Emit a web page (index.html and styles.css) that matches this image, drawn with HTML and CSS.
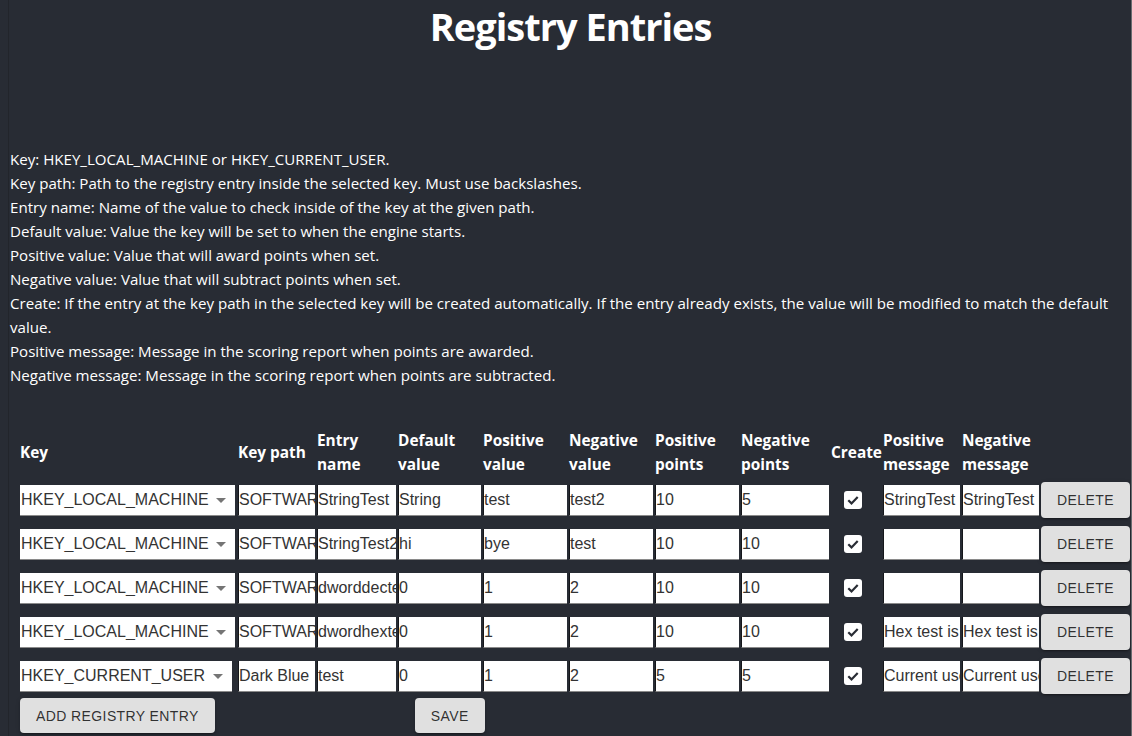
FILE: index.html
```html
<!DOCTYPE html>
<html lang="en">
<head>
<meta charset="utf-8">
<title>Registry Entries</title>
<link rel="stylesheet" href="styles.css">
</head>
<body>
<div class="page">
  <h1 class="title">Registry Entries</h1>
  <div class="help">
    <div>Key: HKEY_LOCAL_MACHINE or HKEY_CURRENT_USER.</div>
    <div>Key path: Path to the registry entry inside the selected key. Must use backslashes.</div>
    <div>Entry name: Name of the value to check inside of the key at the given path.</div>
    <div>Default value: Value the key will be set to when the engine starts.</div>
    <div>Positive value: Value that will award points when set.</div>
    <div>Negative value: Value that will subtract points when set.</div>
    <div>Create: If the entry at the key path in the selected key will be created automatically. If the entry already exists, the value will be modified to match the default value.</div>
    <div>Positive message: Message in the scoring report when points are awarded.</div>
    <div>Negative message: Message in the scoring report when points are subtracted.</div>
  </div>

  <table class="grid">
    <colgroup>
      <col class="c-key"><col class="c-path"><col class="c-name"><col class="c-def">
      <col class="c-pv"><col class="c-nv"><col class="c-pp"><col class="c-np">
      <col class="c-create"><col class="c-pm"><col class="c-nm"><col class="c-del">
    </colgroup>
    <thead>
      <tr>
        <th>Key</th><th>Key path</th><th>Entry name</th><th>Default value</th>
        <th>Positive value</th><th>Negative value</th><th>Positive points</th><th>Negative points</th>
        <th>Create</th><th>Positive message</th><th>Negative message</th><th></th>
      </tr>
    </thead>
    <tbody>
      <tr>
        <td><div class="select"><select><option>HKEY_LOCAL_MACHINE</option><option>HKEY_CURRENT_USER</option></select><svg class="arrow" viewBox="0 0 10 5" width="10" height="5"><path d="M0 0h10L5 5z"/></svg></div></td>
        <td><input type="text" value="SOFTWARE\Test"></td>
        <td><input type="text" value="StringTest"></td>
        <td><input type="text" value="String"></td>
        <td><input type="text" value="test"></td>
        <td><input type="text" value="test2"></td>
        <td><input type="text" value="10"></td>
        <td><input type="text" value="5"></td>
        <td class="cbcell"><span class="check"><svg viewBox="0 0 18 18" width="18" height="18"><path d="M4.3 9.3l3.2 3.1 6.2-6.4" fill="none" stroke="#282c34" stroke-width="2.2"/></svg></span></td>
        <td><input type="text" value="StringTest positive"></td>
        <td><input type="text" value="StringTest negative"></td>
        <td><button class="btn del">Delete</button></td>
      </tr>
      <tr>
        <td><div class="select"><select><option>HKEY_LOCAL_MACHINE</option><option>HKEY_CURRENT_USER</option></select><svg class="arrow" viewBox="0 0 10 5" width="10" height="5"><path d="M0 0h10L5 5z"/></svg></div></td>
        <td><input type="text" value="SOFTWARE\Test"></td>
        <td><input type="text" value="StringTest2"></td>
        <td><input type="text" value="hi"></td>
        <td><input type="text" value="bye"></td>
        <td><input type="text" value="test"></td>
        <td><input type="text" value="10"></td>
        <td><input type="text" value="10"></td>
        <td class="cbcell"><span class="check"><svg viewBox="0 0 18 18" width="18" height="18"><path d="M4.3 9.3l3.2 3.1 6.2-6.4" fill="none" stroke="#282c34" stroke-width="2.2"/></svg></span></td>
        <td><input type="text" value=""></td>
        <td><input type="text" value=""></td>
        <td><button class="btn del">Delete</button></td>
      </tr>
      <tr>
        <td><div class="select"><select><option>HKEY_LOCAL_MACHINE</option><option>HKEY_CURRENT_USER</option></select><svg class="arrow" viewBox="0 0 10 5" width="10" height="5"><path d="M0 0h10L5 5z"/></svg></div></td>
        <td><input type="text" value="SOFTWARE\Test"></td>
        <td><input type="text" value="dworddectest"></td>
        <td><input type="text" value="0"></td>
        <td><input type="text" value="1"></td>
        <td><input type="text" value="2"></td>
        <td><input type="text" value="10"></td>
        <td><input type="text" value="10"></td>
        <td class="cbcell"><span class="check"><svg viewBox="0 0 18 18" width="18" height="18"><path d="M4.3 9.3l3.2 3.1 6.2-6.4" fill="none" stroke="#282c34" stroke-width="2.2"/></svg></span></td>
        <td><input type="text" value=""></td>
        <td><input type="text" value=""></td>
        <td><button class="btn del">Delete</button></td>
      </tr>
      <tr>
        <td><div class="select"><select><option>HKEY_LOCAL_MACHINE</option><option>HKEY_CURRENT_USER</option></select><svg class="arrow" viewBox="0 0 10 5" width="10" height="5"><path d="M0 0h10L5 5z"/></svg></div></td>
        <td><input type="text" value="SOFTWARE\Test"></td>
        <td><input type="text" value="dwordhextest"></td>
        <td><input type="text" value="0"></td>
        <td><input type="text" value="1"></td>
        <td><input type="text" value="2"></td>
        <td><input type="text" value="10"></td>
        <td><input type="text" value="10"></td>
        <td class="cbcell"><span class="check"><svg viewBox="0 0 18 18" width="18" height="18"><path d="M4.3 9.3l3.2 3.1 6.2-6.4" fill="none" stroke="#282c34" stroke-width="2.2"/></svg></span></td>
        <td><input type="text" value="Hex test is positive"></td>
        <td><input type="text" value="Hex test is negative"></td>
        <td><button class="btn del">Delete</button></td>
      </tr>
      <tr>
        <td><div class="select narrow"><select><option>HKEY_CURRENT_USER</option><option>HKEY_LOCAL_MACHINE</option></select><svg class="arrow" viewBox="0 0 10 5" width="10" height="5"><path d="M0 0h10L5 5z"/></svg></div></td>
        <td><input type="text" value="Dark Blue"></td>
        <td><input type="text" value="test"></td>
        <td><input type="text" value="0"></td>
        <td><input type="text" value="1"></td>
        <td><input type="text" value="2"></td>
        <td><input type="text" value="5"></td>
        <td><input type="text" value="5"></td>
        <td class="cbcell"><span class="check"><svg viewBox="0 0 18 18" width="18" height="18"><path d="M4.3 9.3l3.2 3.1 6.2-6.4" fill="none" stroke="#282c34" stroke-width="2.2"/></svg></span></td>
        <td><input type="text" value="Current user positive"></td>
        <td><input type="text" value="Current user negative"></td>
        <td><button class="btn del">Delete</button></td>
      </tr>
    </tbody>
  </table>

  <div class="actions">
    <button class="btn">Add Registry Entry</button>
    <button class="btn">Save</button>
  </div>
</div>
</body>
</html>
```
FILE: styles.css
```css
html {
  overflow: hidden;
  background: #282c34;
}
body {
  margin: 0;
  background: #282c34;
  color: #ffffff;
  font-family: "Open Sans", "Liberation Sans", sans-serif;
  border-right: 1px solid #6a6c70;
  min-height: 736px;
  box-sizing: border-box;
}
.page {
  margin-left: 8px;
  border-left: 1px solid #22252b;
  padding-left: 1px;
  min-height: 736px;
  box-sizing: border-box;
}
.title {
  margin: 0;
  text-align: center;
  font-size: 38px;
  line-height: normal;
  letter-spacing: -1px;
  font-weight: 700;
}
.help {
  margin-top: 95px;
  font-size: 15.1px;
  line-height: 24px;
  padding-right: 10px;
}
.grid {
  margin: 40px 0 0 8px;
  border-spacing: 2px;
  table-layout: fixed;
  width: 1113px;
}
.c-key { width: 216px; }
.c-path { width: 77px; }
.c-name { width: 79px; }
.c-def { width: 83px; }
.c-pv { width: 84px; }
.c-nv { width: 84px; }
.c-pp { width: 84px; }
.c-np { width: 88px; }
.c-create { width: 50px; }
.c-pm { width: 77px; }
.c-nm { width: 77px; }
.c-del { width: 89px; }
.grid th {
  padding: 0;
  text-align: left;
  font-size: 15.4px;
  line-height: 24px;
  font-weight: 700;
  vertical-align: middle;
}
.grid td {
  padding: 0;
  height: 42px;
  vertical-align: middle;
}
.grid input {
  display: block;
  box-sizing: border-box;
  width: 100%;
  height: 31px;
  margin: 0;
  padding: 0;
  border: none;
  border-left: 1px solid #15171b;
  border-bottom: 1px solid #8a8a8a;
  background: #fff;
  font-family: "Liberation Sans", Arial, sans-serif;
  font-size: 16px;
  color: #333;
  outline: none;
}
.select {
  position: relative;
  width: 215px;
}
.select select {
  display: block;
  width: 100%;
  height: 31px;
  box-sizing: border-box;
  margin: 0;
  padding: 0 0 0 1px;
  border: none;
  border-bottom: 1px solid #8a8a8a;
  border-radius: 0;
  background: #fff;
  font-family: "Liberation Sans", Arial, sans-serif;
  font-size: 16px;
  color: #333;
  -webkit-appearance: none;
  appearance: none;
  outline: none;
}
.select.narrow {
  width: 212px;
}
.select .arrow {
  position: absolute;
  right: 9px;
  top: 13px;
  fill: #757575;
}
.grid td.cbcell {
  padding-left: 13px;
}
.check {
  display: block;
  width: 18px;
  height: 18px;
  background: #fff;
  border-radius: 3px;
}
.check svg {
  display: block;
}
.btn {
  box-sizing: border-box;
  height: 36px;
  padding: 0 16px;
  border: none;
  border-radius: 4px;
  background: #e0e0e0;
  color: rgba(0, 0, 0, 0.8);
  font-family: "Liberation Sans", Arial, sans-serif;
  font-size: 14px;
  letter-spacing: 0.4px;
  text-transform: uppercase;
  box-shadow: 0 3px 1px -2px rgba(0,0,0,0.2), 0 2px 2px 0 rgba(0,0,0,0.14), 0 1px 5px 0 rgba(0,0,0,0.12);
}
.btn.del {
  width: 89px;
  padding: 0;
}
.actions {
  display: flex;
  gap: 200px;
  margin: -1px 0 0 10px;
}
.actions .btn {
  height: 35px;
}
```
